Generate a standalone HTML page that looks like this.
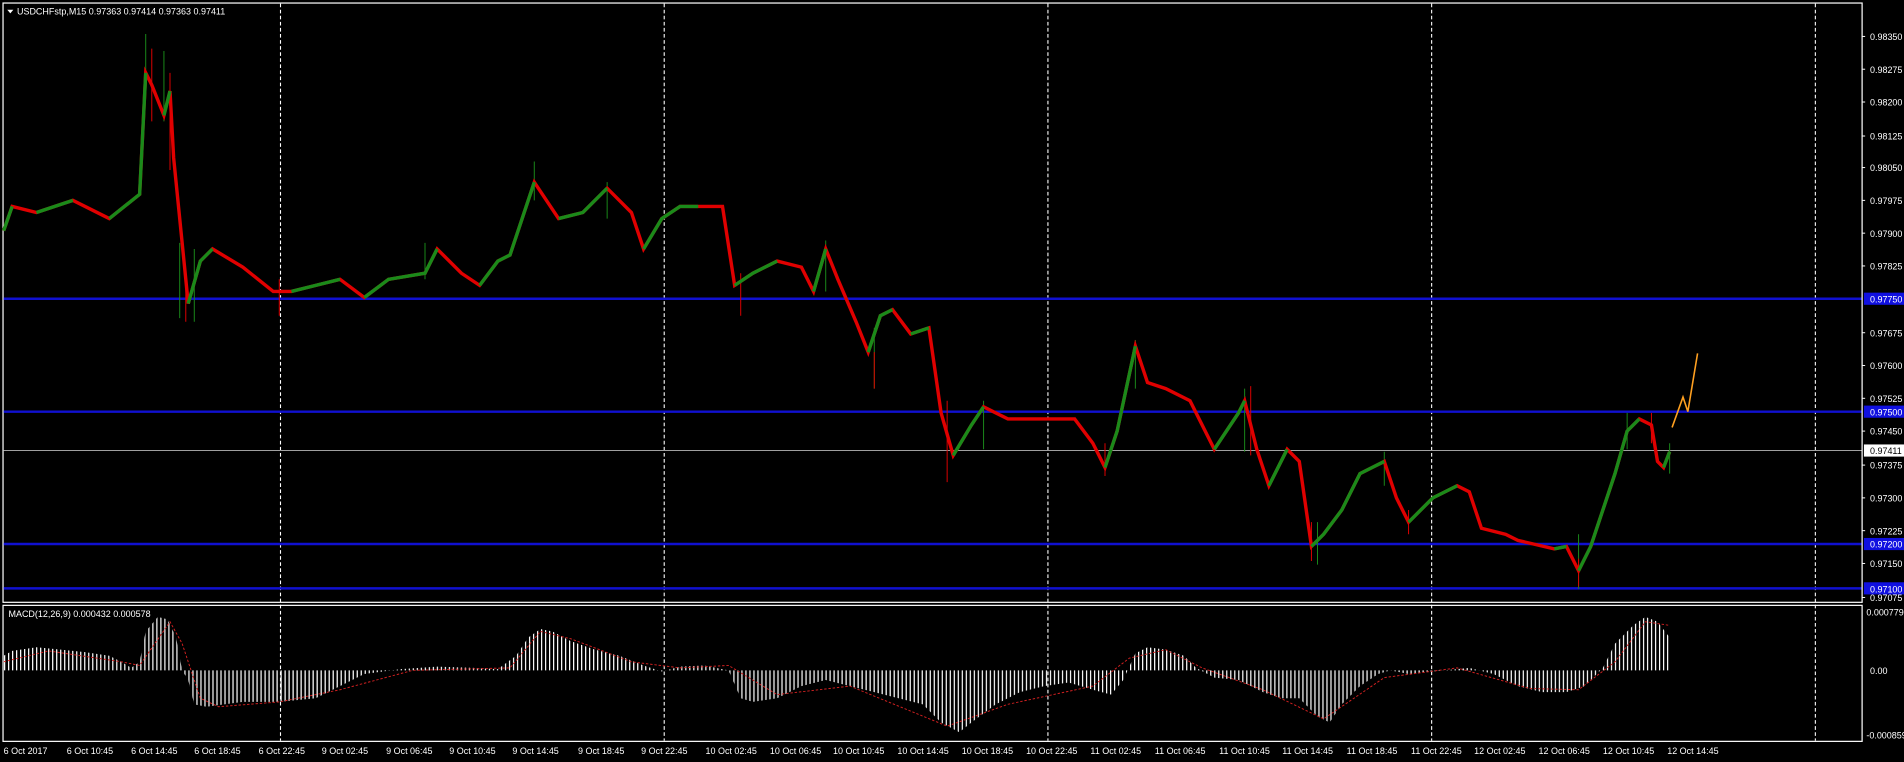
<!DOCTYPE html>
<html><head><meta charset="utf-8"><style>
html,body{margin:0;padding:0;background:#000;overflow:hidden}
svg{display:block}
text{font-family:"Liberation Sans",sans-serif;fill:#fff;font-size:7.4px}
</style></head><body>
<svg width="1904" height="762" viewBox="0 0 1568 627.5" preserveAspectRatio="none">
<defs>
<pattern id="hb" width="3.3" height="10" patternUnits="userSpaceOnUse"><rect x="0" y="0" width="1" height="10" fill="#fff"/></pattern>
</defs>
<rect width="1568" height="628" fill="#000"/>
<rect x="2.5" y="2.5" width="1531" height="493.5" fill="none" stroke="#fff" stroke-width="1"/>
<rect x="2.5" y="498.5" width="1531" height="112" fill="none" stroke="#fff" stroke-width="1"/>
<g stroke="#fff" stroke-width="0.9" stroke-dasharray="3,2">
<line x1="231" y1="3" x2="231" y2="610"/><line x1="547" y1="3" x2="547" y2="610"/><line x1="863" y1="3" x2="863" y2="610"/><line x1="1179" y1="3" x2="1179" y2="610"/><line x1="1495" y1="3" x2="1495" y2="610"/>
</g>
<g stroke="#1010d0" stroke-width="2">
<line x1="3" y1="246" x2="1533" y2="246"/><line x1="3" y1="339" x2="1533" y2="339"/><line x1="3" y1="448" x2="1533" y2="448"/><line x1="3" y1="484.5" x2="1533" y2="484.5"/>
</g>
<line x1="3" y1="371" x2="1533" y2="371" stroke="#a0a0a0" stroke-width="0.8"/>
<!-- wicks -->
<path fill="none" stroke="#1a8a1a" stroke-width="0.8" d="M120,28V70 M135,42V100 M148,200V262 M160,205V265 M350,200V230 M440,133V165 M500,150V180 M680,198V240 M720,270V320 M810,330V370 M935,280V320 M1025,320V372 M1085,430V465 M1140,372V400 M1300,440V485 M1340,340V370 M1375,365V390"/>
<path fill="none" stroke="#e00000" stroke-width="0.8" d="M125,40V100 M140,60V140 M153,225V265 M230,230V260 M610,225V260 M720,290V320 M780,330V397 M910,365V392 M1030,318V375 M1080,430V462 M1160,420V440 M1300,460V483 M1360,340V365"/>
<polyline fill="none" stroke="#e00000" stroke-width="2.8" points="3,190 10,170 30,175 60,165 90,180 115,160 120,60 125,70 135,95 140,75 143,130 150,200 155,250 165,215 175,205 200,220 225,240 240,240 260,235 280,230 300,245 320,230 350,225 360,205 380,225 395,235 410,215 420,210 440,150 460,180 480,175 500,155 520,175 530,205 545,180 560,170 575,170 595,170 605,235 620,225 640,215 660,220 670,240 680,205 690,230 705,265 715,290 725,260 735,255 750,275 765,270 775,340 785,375 800,350 810,335 830,345 860,345 885,345 900,365 910,385 920,355 935,285 945,315 960,320 980,330 1000,370 1020,340 1025,330 1035,370 1045,400 1060,370 1070,380 1080,450 1090,440 1105,420 1120,390 1130,385 1140,380 1150,410 1160,430 1180,410 1200,400 1210,405 1220,435 1240,440 1250,445 1280,452 1290,450 1300,470 1310,450 1320,420 1330,390 1340,355 1350,345 1360,350 1365,380 1370,385 1375,372"/>
<path fill="none" stroke="#1a8a1a" stroke-width="2.8" d="M3,190L10,170 M30,175L60,165 M90,180L115,160L120,60 M135,95L140,75 M155,250L165,215L175,205 M240,240L260,235L280,230 M300,245L320,230L350,225L360,205 M395,235L410,215L420,210L440,150 M460,180L480,175L500,155 M530,205L545,180L560,170L575,170 M605,235L620,225L640,215 M670,240L680,205 M715,290L725,260L735,255 M750,275L765,270 M785,375L800,350L810,335 M910,385L920,355L935,285 M1000,370L1020,340L1025,330 M1045,400L1060,370 M1080,450L1090,440L1105,420L1120,390L1130,385L1140,380 M1160,430L1180,410L1200,400 M1280,452L1290,450 M1300,470L1310,450L1320,420L1330,390L1340,355L1350,345 M1370,385L1375,372"/>
<polyline fill="none" stroke="#ffa020" stroke-width="1.3" points="1377,352 1386,327 1390,339 1398,291"/>
<polygon fill="url(#hb)" points="3,552 3,540 10,536 30,533 50,535 70,537 90,540 100,545 108,550 115,545 120,520 130,508 138,510 145,525 150,552 155,560 160,580 170,582 200,578 230,578 260,575 280,565 300,555 330,551 360,549 390,550 410,551 425,540 435,525 445,518 455,520 470,528 490,535 510,540 530,548 545,553 560,549 580,548 600,552 610,575 620,578 640,575 660,565 680,560 700,565 720,570 740,575 760,580 775,595 790,603 800,595 820,580 840,570 860,565 880,562 900,568 915,572 925,560 935,538 945,533 960,535 975,540 985,550 1000,558 1020,560 1040,570 1055,575 1070,575 1085,590 1095,595 1105,580 1120,565 1135,555 1145,552 1160,555 1180,553 1200,551 1210,550 1230,555 1250,565 1270,570 1290,570 1305,565 1320,550 1330,530 1345,515 1355,508 1365,512 1375,525 1375,552"/>
<polyline fill="none" stroke="#d02020" stroke-width="0.8" stroke-dasharray="2,1.5" points="3,545 40,536 100,545 115,548 140,512 150,530 165,575 180,582 230,578 280,568 340,552 420,550 445,520 470,526 520,545 560,550 600,548 640,572 700,565 780,598 830,580 900,565 930,542 960,535 990,550 1040,568 1090,592 1140,558 1200,550 1260,567 1300,568 1330,545 1355,512 1375,515"/>
<path d="M6,8 L11,8 L8.5,11 Z" fill="#fff"/>
<text x="14" y="12">USDCHFstp,M15  0.97363 0.97414 0.97363 0.97411</text>
<text x="7" y="508">MACD(12,26,9) 0.000432 0.000578</text>
<g>
<text x="1540" y="33">0.98350</text><text x="1540" y="60">0.98275</text><text x="1540" y="87">0.98200</text><text x="1540" y="115">0.98125</text><text x="1540" y="141">0.98050</text><text x="1540" y="168">0.97975</text><text x="1540" y="195">0.97900</text><text x="1540" y="222">0.97825</text><text x="1540" y="277">0.97675</text><text x="1540" y="304">0.97600</text><text x="1540" y="331">0.97525</text><text x="1540" y="358">0.97450</text><text x="1540" y="386">0.97375</text><text x="1540" y="413">0.97300</text><text x="1540" y="440">0.97225</text><text x="1540" y="467">0.97150</text><text x="1540" y="495">0.97075</text>
</g>
<g stroke="#fff" stroke-width="0.8">
<line x1="1533" y1="30" x2="1536" y2="30"/><line x1="1533" y1="57" x2="1536" y2="57"/><line x1="1533" y1="84" x2="1536" y2="84"/><line x1="1533" y1="112" x2="1536" y2="112"/><line x1="1533" y1="138" x2="1536" y2="138"/><line x1="1533" y1="165" x2="1536" y2="165"/><line x1="1533" y1="192" x2="1536" y2="192"/><line x1="1533" y1="219" x2="1536" y2="219"/><line x1="1533" y1="274" x2="1536" y2="274"/><line x1="1533" y1="301" x2="1536" y2="301"/><line x1="1533" y1="328" x2="1536" y2="328"/><line x1="1533" y1="355" x2="1536" y2="355"/><line x1="1533" y1="383" x2="1536" y2="383"/><line x1="1533" y1="410" x2="1536" y2="410"/><line x1="1533" y1="437" x2="1536" y2="437"/><line x1="1533" y1="464" x2="1536" y2="464"/><line x1="1533" y1="492" x2="1536" y2="492"/>
</g>
<g fill="#1010e0"><rect x="1535" y="241" width="33" height="10"/><rect x="1535" y="334" width="33" height="10"/><rect x="1535" y="443" width="33" height="10"/><rect x="1535" y="479.5" width="33" height="10"/></g>
<g style="fill:#0000a0"><text x="1540" y="249">0.97750</text><text x="1540" y="342">0.97500</text><text x="1540" y="451">0.97200</text><text x="1540" y="488">0.97100</text></g>
<rect x="1535" y="366" width="33" height="10" fill="#fff"/>
<text x="1540" y="374" style="fill:#000">0.97411</text>
<text x="1537" y="507">0.000779</text><text x="1540" y="555">0.00</text><text x="1537" y="608">-0.000859</text>
<g>
<text x="3" y="621">6 Oct 2017</text><text x="55" y="621">6 Oct 10:45</text><text x="108" y="621">6 Oct 14:45</text><text x="160" y="621">6 Oct 18:45</text><text x="213" y="621">6 Oct 22:45</text><text x="265" y="621">9 Oct 02:45</text><text x="318" y="621">9 Oct 06:45</text><text x="370" y="621">9 Oct 10:45</text><text x="422" y="621">9 Oct 14:45</text><text x="476" y="621">9 Oct 18:45</text><text x="528" y="621">9 Oct 22:45</text><text x="581" y="621">10 Oct 02:45</text><text x="634" y="621">10 Oct 06:45</text><text x="686" y="621">10 Oct 10:45</text><text x="739" y="621">10 Oct 14:45</text><text x="792" y="621">10 Oct 18:45</text><text x="845" y="621">10 Oct 22:45</text><text x="898" y="621">11 Oct 02:45</text><text x="951" y="621">11 Oct 06:45</text><text x="1004" y="621">11 Oct 10:45</text><text x="1056" y="621">11 Oct 14:45</text><text x="1109" y="621">11 Oct 18:45</text><text x="1162" y="621">11 Oct 22:45</text><text x="1214" y="621">12 Oct 02:45</text><text x="1267" y="621">12 Oct 06:45</text><text x="1320" y="621">12 Oct 10:45</text><text x="1373" y="621">12 Oct 14:45</text>
</g>
</svg>
</body></html>
